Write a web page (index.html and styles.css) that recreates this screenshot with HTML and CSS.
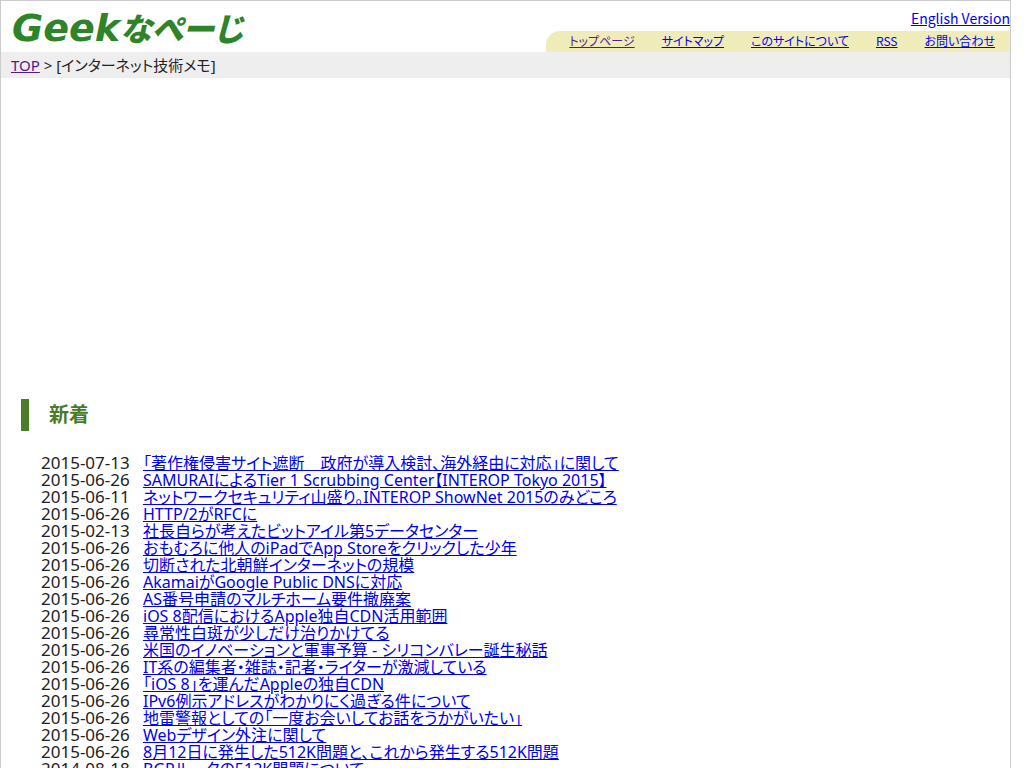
FILE: index.html
```html
<!DOCTYPE html>
<html lang="ja">
<head>
  <meta charset="UTF-8">
  <title>インターネット技術メモ</title>
  <link rel="stylesheet" href="styles.css">
</head>
<body>
  <div class="page">
    <header class="header">
      <a class="logo" href="#"><span class="logo-latin">Geek</span><span class="logo-kana">なぺーじ</span></a>
      <div class="header-right">
        <a class="lang" href="#">English Version</a>
        <nav>
          <ul class="menu">
            <li><a class="visited" href="#">トップページ</a></li>
            <li><a href="#">サイトマップ</a></li>
            <li><a href="#">このサイトについて</a></li>
            <li><a href="#">RSS</a></li>
            <li><a href="#">お問い合わせ</a></li>
          </ul>
        </nav>
      </div>
    </header>
    <div class="breadcrumb"><a class="visited" href="#">TOP</a> &gt; [インターネット技術メモ]</div>
    <main>
      <div class="ad"></div>
      <h2>新着</h2>
      <ul class="news">
        <li><time>2015-07-13</time><a href="#">「著作権侵害サイト遮断　政府が導入検討、海外経由に対応」に関して</a></li>
        <li><time>2015-06-26</time><a href="#">SAMURAIによるTier 1 Scrubbing Center【INTEROP Tokyo 2015】</a></li>
        <li><time>2015-06-11</time><a href="#">ネットワークセキュリティ山盛り。INTEROP ShowNet 2015のみどころ</a></li>
        <li><time>2015-06-26</time><a href="#">HTTP/2がRFCに</a></li>
        <li><time>2015-02-13</time><a href="#">社長自らが考えたビットアイル第5データセンター</a></li>
        <li><time>2015-06-26</time><a href="#">おもむろに他人のiPadでApp Storeをクリックした少年</a></li>
        <li><time>2015-06-26</time><a href="#">切断された北朝鮮インターネットの規模</a></li>
        <li><time>2015-06-26</time><a href="#">AkamaiがGoogle Public DNSに対応</a></li>
        <li><time>2015-06-26</time><a href="#">AS番号申請のマルチホーム要件撤廃案</a></li>
        <li><time>2015-06-26</time><a href="#">iOS 8配信におけるApple独自CDN活用範囲</a></li>
        <li><time>2015-06-26</time><a href="#">尋常性白斑が少しだけ治りかけてる</a></li>
        <li><time>2015-06-26</time><a href="#">米国のイノベーションと軍事予算 - シリコンバレー誕生秘話</a></li>
        <li><time>2015-06-26</time><a href="#">IT系の編集者・雑誌・記者・ライターが激減している</a></li>
        <li><time>2015-06-26</time><a href="#">「iOS 8」を運んだAppleの独自CDN</a></li>
        <li><time>2015-06-26</time><a href="#">IPv6例示アドレスがわかりにく過ぎる件について</a></li>
        <li><time>2015-06-26</time><a href="#">地雷警報としての「一度お会いしてお話をうかがいたい」</a></li>
        <li><time>2015-06-26</time><a href="#">Webデザイン外注に関して</a></li>
        <li><time>2015-06-26</time><a href="#">8月12日に発生した512K問題と、これから発生する512K問題</a></li>
        <li><time>2014-08-18</time><a href="#">BGPルータの512K問題について</a></li>
      </ul>
    </main>
  </div>
</body>
</html>
```
FILE: styles.css
```css
body {
  margin: 0 13px 0 0;
  background-color: #fff;
  color: #222;
  font-family: "Noto Sans", "Noto Sans CJK JP", sans-serif;
  font-size: 16px;
  font-feature-settings: "palt";
}
a {
  color: #0000ee;
}
a.visited {
  color: #551a8b;
}
ul {
  list-style: none;
  margin: 0;
  padding: 0;
}
.page {
  border: 1px solid #ccc;
  border-bottom: none;
}
.header {
  display: flex;
  justify-content: space-between;
  height: 51px;
}
.logo {
  display: flex;
  align-items: baseline;
  padding-left: 11px;
  color: #2e8428;
  font-weight: 900;
  font-style: italic;
  line-height: 52px;
  text-decoration: none;
}
.logo-latin {
  font-family: "DejaVu Sans", sans-serif;
  font-size: 38px;
}
.logo-kana {
  font-family: "Noto Sans CJK JP", sans-serif;
  font-size: 32px;
}
.header-right {
  display: flex;
  flex-direction: column;
  justify-content: space-between;
  align-items: flex-end;
}
.lang {
  padding-top: 7px;
  font-family: "Noto Sans CJK JP", sans-serif;
  font-size: 14px;
  line-height: 20px;
}
.menu {
  display: flex;
  gap: 27px;
  padding: 0 15px 2px 23px;
  border-top-left-radius: 14px;
  background-color: #f0ecba;
  font-family: "Noto Sans CJK JP", sans-serif;
  font-size: 12px;
  line-height: 19px;
}
.breadcrumb {
  padding-left: 10px;
  background-color: #eee;
  font-size: 15px;
  line-height: 26px;
}
.ad {
  height: 321px;
}
h2 {
  margin: 0 20px;
  padding-left: 20px;
  border-left: 8px solid #4a7b26;
  color: #4a7b26;
  font-size: 20px;
  line-height: 32px;
}
.news {
  margin: 24px 40px 0;
}
.news li {
  display: flex;
  align-items: baseline;
  height: 17px;
  line-height: 16px;
}
.news time {
  width: 102px;
  font-size: 17px;
}
```
